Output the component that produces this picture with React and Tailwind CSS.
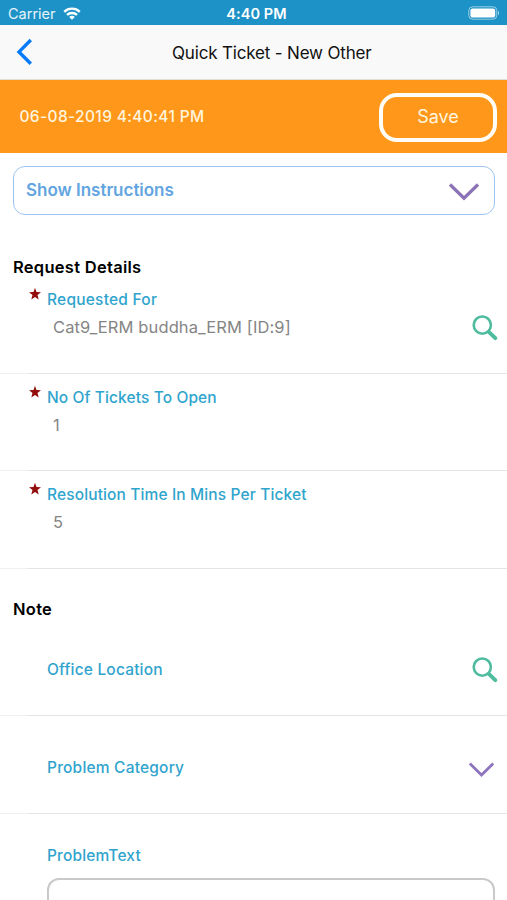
const requestFields = [
  { label: "Requested For", value: "Cat9_ERM buddha_ERM [ID:9]", search: true, height: "h-[98px]", labelClass: "tracking-[0.23px]" },
  { label: "No Of Tickets To Open", value: "1", height: "h-[97px]", labelClass: "tracking-[0.11px]" },
  { label: "Resolution Time In Mins Per Ticket", value: "5", height: "h-[98px]", labelClass: "tracking-[0.13px]" },
];

function SearchIcon({ className = "" }) {
  return (
    <svg className={`h-[26px] w-[26px] shrink-0 ${className}`} viewBox="0 0 26 26" fill="none" stroke="#4fbc9f">
      <circle cx="10.3" cy="10.1" r="8.6" strokeWidth="2.6" />
      <path d="M16.8 16.8 L23.3 23.1" strokeWidth="3.9" strokeLinecap="round" />
    </svg>
  );
}

function Star() {
  return (
    <svg className="absolute left-[29px] top-[12px] h-3 w-3" viewBox="0 0 12 12" fill="#930d0d">
      <path d="M6 -0.2 L7.5 4.1 L12 4.2 L8.5 7 L9.7 11.4 L6 8.9 L2.3 11.4 L3.5 7 L0 4.2 L4.5 4.1 Z" />
    </svg>
  );
}

function Divider() {
  return (
    <div className="absolute inset-x-0 bottom-0 flex h-[1.5px]">
      <span className="w-[28px] bg-[#efefef]" />
      <span className="flex-1 bg-[#e4e4e4]" />
    </div>
  );
}

function Label({ children, className = "" }) {
  return (
    <p className={`text-[15.5px] leading-5 font-medium text-[#2fa4cd] ${className}`}>{children}</p>
  );
}

export default function App() {
  return (
    <div className="h-[900px] w-[507px] overflow-hidden bg-white font-['Inter',sans-serif] text-black">
      {/* Status bar */}
      <div className="grid h-[25px] grid-cols-3 items-center bg-[#1c92c6] pt-[3px] pr-[7px] pl-2 text-white">
        <div className="flex items-center gap-[7px]">
          <span className="text-[14.5px] leading-5 text-white/90">Carrier</span>
          <svg className="-mt-px h-[13px] w-[18px]" viewBox="0 0 18 13" fill="none" stroke="white" strokeWidth="2.4">
            <path d="M1.2 4.8 C5.5 0.6 12.5 0.6 16.8 4.8" />
            <path d="M4 7.9 C6.8 5.3 11.2 5.3 14 7.9" />
            <path d="M9 12.7 L6.2 9.9 C7.8 8.5 10.2 8.5 11.8 9.9 Z" fill="white" stroke="none" />
          </svg>
        </div>
        <span className="pl-[5px] text-center text-[14.5px] leading-5 font-semibold tracking-[0.1px]">4:40 PM</span>
        <svg className="-mt-[2px] h-[14px] w-[32px] justify-self-end" viewBox="0 0 32 14" fill="none">
          <rect x="0.8" y="0.8" width="28" height="12.4" rx="3.8" stroke="white" strokeOpacity="0.55" strokeWidth="1" />
          <rect x="2.4" y="2.4" width="24.8" height="9.2" rx="2.2" fill="white" />
          <path d="M30 4.8 C31.6 5.5 31.6 8.5 30 9.2 Z" fill="white" fillOpacity="0.6" />
        </svg>
      </div>

      {/* Navigation */}
      <header className="flex h-[55px] items-center border-b border-[#e3ddd8] bg-[#f9f9f9]">
        <svg className="ml-4 h-[28px] w-[18px]" viewBox="0 0 18 28" fill="none" stroke="#087bf9" strokeWidth="3.4">
          <path d="M14.8 2 L3 13.9 L14.8 25.8" />
        </svg>
        <h1 className="ml-[138px] pt-px text-[17px] leading-6 tracking-[-0.17px] text-[#111]">Quick Ticket - New Other</h1>
      </header>

      <div className="flex h-[73px] items-center justify-between bg-[#ff981a] pt-px pr-[10px] pl-[19.5px] text-[#fff5df]">
        <span className="text-[15.5px] font-medium tracking-[0.36px]">06-08-2019 4:40:41 PM</span>
        <button className="h-[49px] w-[118px] rounded-[18px] border-4 border-[#fffdf5] text-[18px] leading-6 tracking-[-0.1px]">
          Save
        </button>
      </div>

      <main>
        <div className="mt-[13px] mr-3 ml-[13px] flex h-[49px] items-center justify-between rounded-[12px] border-[1.5px] border-[#9dc4f0] pr-[14px] pl-[12px]">
          <span className="pt-px text-[17px] font-semibold tracking-[-0.02px] text-[#62a5e0]">Show Instructions</span>
          <svg className="mt-[3px] h-[18px] w-[32px]" viewBox="0 0 32 18" fill="none" stroke="#8a72b5" strokeWidth="3.2">
            <path d="M2 1.5 L16 15.2 L30 1.5" />
          </svg>
        </div>

        <h2 className="mt-[40px] h-[21px] pl-[13px] text-[16.5px] leading-6 font-semibold tracking-[0.28px]">Request Details</h2>
        {requestFields.map((field) => (
          <div key={field.label} className={`relative pt-[14px] pl-[47px] ${field.height}`}>
            <Star />
            <Label className={field.labelClass}>{field.label}</Label>
            <div className="flex h-[33px] items-center justify-between pr-[9px] pl-[6px]">
              <span className="text-[16.5px] leading-6 tracking-[0.11px] text-[#858585]">{field.value}</span>
              {field.search && <SearchIcon className="mt-[3px]" />}
            </div>
            <Divider />
          </div>
        ))}

        <h2 className="flex h-[49px] items-end pl-[13px] text-[16.5px] leading-[18px] font-semibold tracking-[0.28px]">Note</h2>
        <div className="relative flex h-[98px] items-center justify-between pt-[6px] pr-[9px] pl-[47px]">
          <Label className="tracking-[0.18px]">Office Location</Label>
          <SearchIcon />
          <Divider />
        </div>
        <div className="relative flex h-[98px] items-center justify-between pt-[6px] pr-[12px] pl-[47px]">
          <Label className="tracking-[0.2px]">Problem Category</Label>
          <svg className="mt-[3px] h-[16px] w-[27px]" viewBox="0 0 27 16" fill="none" stroke="#8e73bd" strokeWidth="2.8">
            <path d="M1.8 1.5 L13.5 13 L25.2 1.5" />
          </svg>
          <Divider />
        </div>
        <div className="pt-[32px] pr-3 pl-[47px]">
          <Label className="tracking-[0.15px]">ProblemText</Label>
          <div className="mt-[12px] h-[80px] rounded-[12px] border-2 border-[#c9c9c9]" />
        </div>
      </main>
    </div>
  );
}
